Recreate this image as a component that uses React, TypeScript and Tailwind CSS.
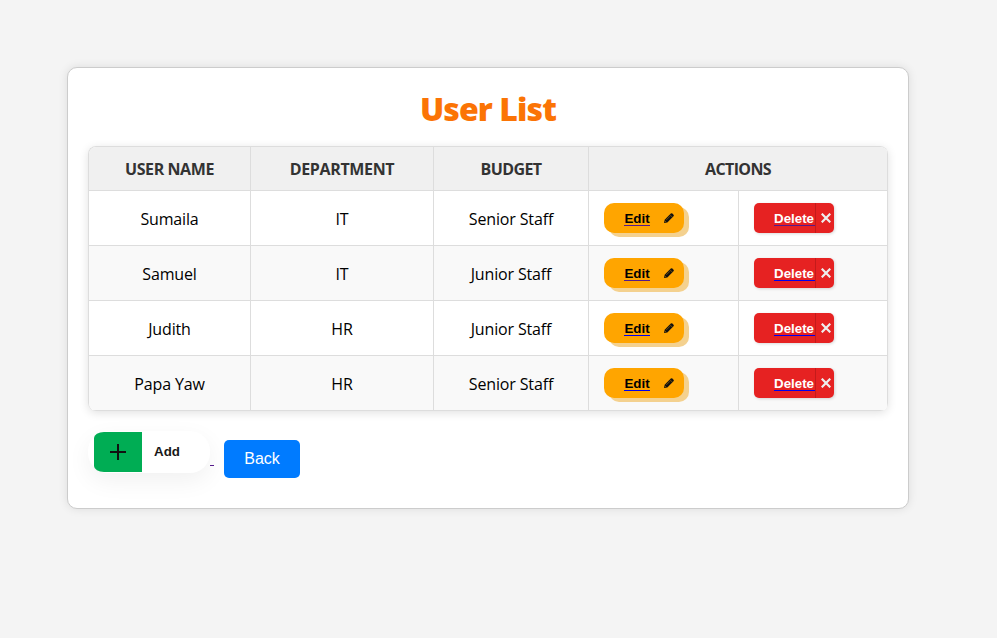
import React from "react";

type User = { name: string; dept: string; level: string; editVisited: boolean; deleteVisited: boolean };

const users: User[] = [
  { name: "Sumaila", dept: "IT", level: "Senior Staff", editVisited: true, deleteVisited: true },
  { name: "Samuel", dept: "IT", level: "Junior Staff", editVisited: true, deleteVisited: false },
  { name: "Judith", dept: "HR", level: "Junior Staff", editVisited: false, deleteVisited: false },
  { name: "Papa Yaw", dept: "HR", level: "Senior Staff", editVisited: false, deleteVisited: false },
];

const headers = [
  { label: "USER NAME", style: "tracking-[-0.42px]" },
  { label: "DEPARTMENT", style: "tracking-[-0.35px]" },
  { label: "BUDGET", style: "tracking-[-0.6px]" },
  { label: "ACTIONS", style: "tracking-[-0.65px]" },
];

const cell = "flex items-center border-r border-b border-[#dddddd]";
const textCell = cell + " justify-center pt-px tracking-[-0.15px]";

function EditButton({ visited }: { visited: boolean }) {
  return (
    <button className="flex h-[30px] w-20 items-center rounded-[10px] bg-[#ffa500] pl-5 font-['Liberation_Sans',sans-serif] text-[13.333px] font-bold shadow-[5px_4px_0_#f4d18f]">
      <span className={"mt-px w-[26px] border-b pt-px leading-[12px] text-black " + (visited ? "border-[#551a8b]" : "border-[#0000ee]")}>Edit</span>
      <svg className="ml-[14px] h-[10px] w-[10px]" viewBox="0 0 10 10">
        <path d="M0 10l.7-3.300L6.800.6Q7.600-.1 8.400.6L9.500 1.700Q10.200 2.500 9.500 3.300L3.300 9.400z" fill="#111" />
        <path d="M5.800 1.600l2.600 2.600M2.300 6.900L6 3.200M1 8l1.100 1.100" stroke="#ffa500" strokeWidth=".4" />
      </svg>
    </button>
  );
}

function DeleteButton({ visited }: { visited: boolean }) {
  return (
    <button className="flex h-[30px] w-20 items-center overflow-hidden rounded-[5px] bg-[#e62222] pl-[21px] font-['Liberation_Sans',sans-serif] text-[13.333px] font-bold shadow-[1px_1px_3px_rgba(0,0,0,0.15)]">
      <span className={"mt-px -ml-px w-[41px] border-b pt-px text-left leading-[12px] text-white " + (visited ? "border-[#551a8b]" : "border-[#0000ee]")}>Delete</span>
      <span className="flex h-[30px] w-[19px] items-center border-l border-[#c41b1b] pl-[5px]">
        <svg className="h-[10px] w-[10px]" viewBox="0 0 10 10" stroke="#eee" strokeWidth="2.2">
          <path d="M.7.7l8.600 8.600M9.300.7L.7 9.300" />
        </svg>
      </span>
    </button>
  );
}

export default function App() {
  return (
    <div className="h-[638px] w-[997px] overflow-hidden bg-[#f4f4f4] pt-[67px] pl-[67px] font-['Open_Sans',sans-serif] text-base text-black">
      <main className="h-[442px] w-[842px] rounded-[10px] border border-[#cccccc] bg-white px-5 shadow-[0_0_10px_rgba(0,0,0,0.1)]">
        <h1 className="flex h-[78px] items-center justify-center pt-[3px] text-[32px] font-extrabold text-[#fb7405]">
          <span className="tracking-[-0.9px]">User List</span>
        </h1>
        <div className="grid w-[800px] grid-cols-[162px_183px_155px_150px_149px] grid-rows-[44px_55px_55px_55px_55px] overflow-hidden rounded-[8px] border-t border-l border-[#dddddd] shadow-[0_2px_10px_rgba(0,0,0,0.12)]">
          {headers.map((h, i) => (
            <div key={h.label} className={cell + " justify-center bg-[#f0f0f0] pt-px font-bold text-[#333333]" + (i === 3 ? " col-span-2" : "")}>
              <span className={h.style}>{h.label}</span>
            </div>
          ))}
          {users.map((u, i) => {
            const bg = i % 2 ? " bg-[#f9f9f9]" : " bg-white";
            return (
              <React.Fragment key={u.name}>
                <div className={textCell + bg}>{u.name}</div>
                <div className={textCell + bg}>{u.dept}</div>
                <div className={textCell + bg}>{u.level}</div>
                <div className={cell + " pl-[15px]" + bg}><EditButton visited={u.editVisited} /></div>
                <div className={cell + " pl-[15px]" + bg}><DeleteButton visited={u.deleteVisited} /></div>
              </React.Fragment>
            );
          })}
        </div>
        <div className="flex pt-5">
          <button className="flex h-[42px] w-[122px] items-center rounded-[20px] bg-white pl-[6px] shadow-[0_8px_24px_rgba(0,0,0,0.06)]">
            <span className="flex h-10 w-12 items-center justify-center rounded-l-[10px_6px] bg-[#00ad54]">
              <svg className="h-4 w-4" viewBox="0 0 16 16" stroke="#111" strokeWidth="2"><path d="M8 0v16M0 8h16" /></svg>
            </span>
            <span className="pl-3 font-['Liberation_Sans',sans-serif] text-[13.333px] font-bold text-[#181818]">Add</span>
          </button>
          <span className="mt-[34px] h-px w-[4px] bg-[#551a8b]" />
          <button className="mt-[9px] ml-[10px] h-[38px] w-[76px] rounded-[5px] bg-[#007bff] font-['Liberation_Sans',sans-serif] text-base text-white">Back</button>
        </div>
      </main>
    </div>
  );
}
